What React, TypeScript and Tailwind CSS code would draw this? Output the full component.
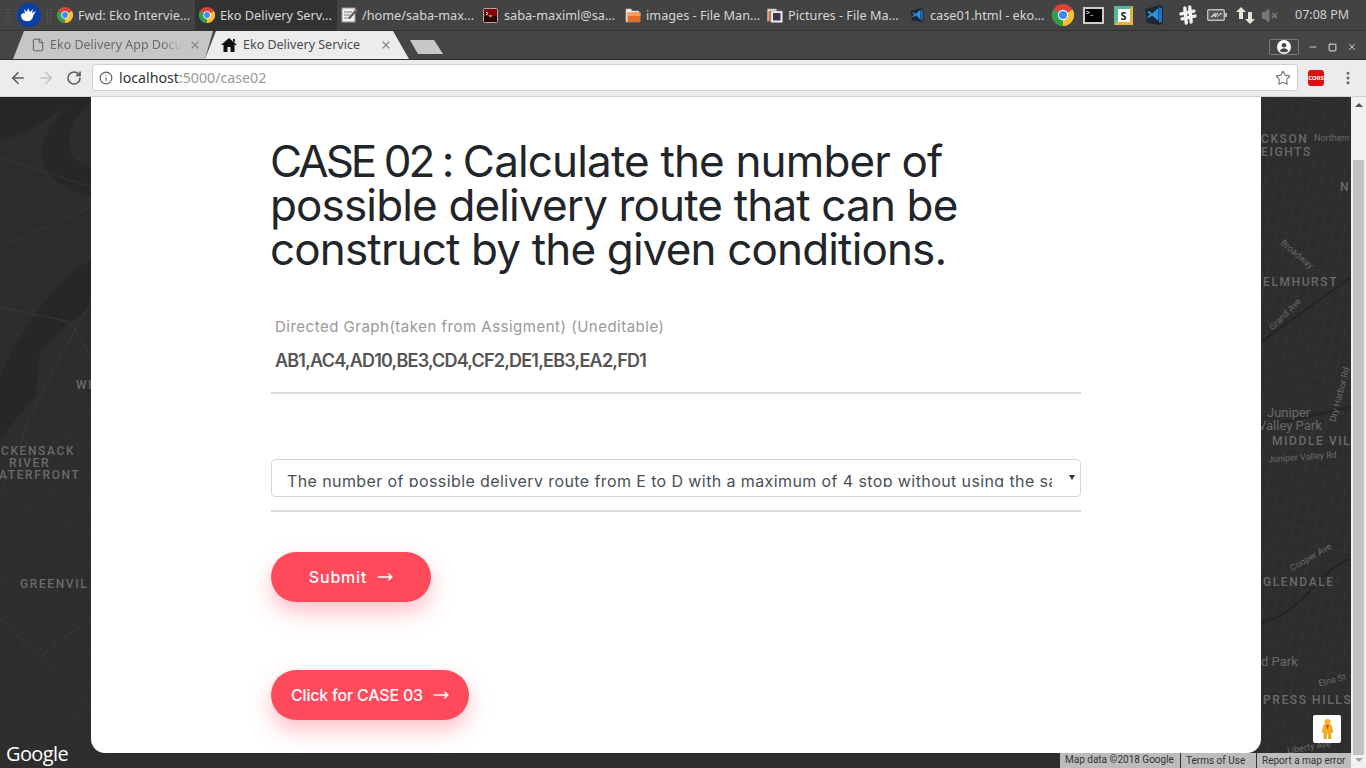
import { ArrowLeft, ArrowRight, Info, RotateCw, Star, X, File, Minus, Square, MoveRight, EllipsisVertical, VolumeX, Hash } from "lucide-react";

const poppins = "font-['Inter','Noto_Sans',sans-serif]";

function ChromeIcon({ size = 16 }: { size?: number }) {
  return (
    <svg width={size} height={size} viewBox="0 0 24 24" className="shrink-0">
      <circle cx="12" cy="12" r="12" fill="#db4437" />
      <path d="M12 12 L22.4 6 A12 12 0 0 1 12 24 Z" fill="#fbc02d" />
      <path d="M12 12 L12 24 A12 12 0 0 1 1.6 6 Z" fill="#2e9e4f" />
      <circle cx="12" cy="12" r="5.6" fill="#fff" />
      <circle cx="12" cy="12" r="4.4" fill="#4285f4" />
    </svg>
  );
}

function EditorIcon() {
  return (
    <svg width="16" height="16" viewBox="0 0 16 16" className="shrink-0">
      <rect x="1" y="1" width="13" height="14" fill="#f2f2f2" stroke="#999" />
      <path d="M3 5h8M3 8h6M3 11h5" stroke="#777" />
      <path d="M7 11 14 3l1.5 1.5L9 12z" fill="#555" />
      <path d="M14 2.5l1.5 1.5" stroke="#e060a0" strokeWidth="1.5" />
    </svg>
  );
}

function TerminalRedIcon() {
  return (
    <svg width="15" height="15" viewBox="0 0 15 15" className="shrink-0">
      <rect x="0.5" y="0.5" width="14" height="14" rx="1" fill="#8b0000" stroke="#aaa" />
      <rect x="1" y="8" width="13" height="6" fill="#300" />
      <path d="M3 4l2 1.5L3 7M6 8h3" stroke="#fff" fill="none" />
    </svg>
  );
}

function FolderIcon() {
  return (
    <svg width="16" height="15" viewBox="0 0 16 15" className="shrink-0">
      <path d="M1 1h5l1 2h7v11H1z" fill="#eee" stroke="#bbb" strokeWidth="0.6" />
      <rect x="2.5" y="4.5" width="13" height="9.5" fill="#e2702a" />
      <rect x="2.5" y="4.5" width="13" height="3.5" fill="#f0a060" />
    </svg>
  );
}

function PicturesIcon() {
  return (
    <svg width="16" height="15" viewBox="0 0 16 15" className="shrink-0">
      <rect x="0.5" y="1" width="9" height="12" fill="#ddd" stroke="#aaa" strokeWidth="0.6" />
      <rect x="1.5" y="3" width="3" height="10" fill="#d9702e" />
      <rect x="4" y="3" width="11.5" height="11.5" fill="#eee" stroke="#999" strokeWidth="0.6" />
      <rect x="6" y="5" width="7.5" height="7.5" fill="#3c3350" />
    </svg>
  );
}

function VsCodeIcon({ size = 14 }: { size?: number }) {
  return (
    <svg width={size} height={size} viewBox="0 0 20 20" className="shrink-0">
      <path d="M1 4 16 0l3 2v16l-3 2L3 18z" fill="#1c2733" />
      <path d="M14.5 3v13L8 10.5 5 13l-2-1 3-2.500L3 7l2-1 3 2.500z" fill="#2f8fdc" />
      <path d="M15 2l3 1.500v13L15 18z" fill="#1477c9" />
    </svg>
  );
}

const windowItems = [
  { label: "Fwd: Eko Intervie...", icon: <ChromeIcon />, active: false },
  { label: "Eko Delivery Serv...", icon: <ChromeIcon />, active: true },
  { label: "/home/saba-max...", icon: <EditorIcon />, active: false },
  { label: "saba-maximl@sa...", icon: <TerminalRedIcon />, active: false },
  { label: "images - File Man...", icon: <FolderIcon />, active: false },
  { label: "Pictures - File Ma...", icon: <PicturesIcon />, active: false },
  { label: "case01.html - eko...", icon: <VsCodeIcon />, active: false },
];

function Grip() {
  return <div className="h-[14px] w-[5px] bg-[radial-gradient(#666_1px,transparent_1px)] bg-[length:3px_3px]" />;
}

function TaskBar() {
  return (
    <div className="flex h-[31px] shrink-0 items-center border-b border-[#333] bg-[#434343] font-['Noto_Sans',sans-serif] text-[12.7px] text-[#d6d6d6]">
      <div className="ml-[5px] mr-[7px]"><Grip /></div>
      <div className="flex h-[24px] w-[24px] items-center justify-center rounded-full bg-[#0b3ea6]">
        <svg width="18" height="16" viewBox="0 0 18 16">
          <path d="M1 8C2 6 4 6 5 6L4 2l3 3 1-4 2 4 3-3-1 4 4-2-3 5c0 3-3 6-7 5-3 0-5-3-5-6z" fill="#fff" />
        </svg>
      </div>
      <div className="ml-[5px] mr-[2px]"><Grip /></div>
      {windowItems.map((item) => (
        <div
          key={item.label}
          className={`flex h-[30px] w-[142px] items-center gap-[6px] pl-[4px] ${item.active ? "bg-[#323232]" : ""}`}
        >
          <div className="flex w-[15px] justify-center">{item.icon}</div>
          <span className="mt-[1px] whitespace-nowrap">{item.label}</span>
        </div>
      ))}
      <div className="ml-[5px] flex items-center">
        <ChromeIcon size={22} />
        <div className="ml-[9px] flex h-[17px] w-[21px] items-start justify-start border-2 border-[#ccc] bg-black pl-[1px] text-[7px] leading-[8px] text-white">&gt;_</div>
        <div className="ml-[10px] flex h-[19px] w-[19px] items-center justify-center bg-[linear-gradient(135deg,#54b89a_0_50%,#e8b23a_50%_100%)]">
          <span className="flex h-[13px] w-[12px] items-center justify-center bg-white text-[11px] font-bold leading-none text-[#222]">S</span>
        </div>
        <div className="ml-[11px]"><VsCodeIcon size={20} /></div>
        <div className="ml-[14px]"><Hash size={20} strokeWidth={4} color="#f2f2f2" className="-rotate-12" /></div>
        <svg width="20" height="12" viewBox="0 0 20 12" className="ml-[9px]">
          <rect x="0.7" y="0.7" width="16.600" height="10.600" rx="1" fill="#555" stroke="#bdbdbd" strokeWidth="1.400" />
          <rect x="18" y="4" width="2" height="4" fill="#bdbdbd" />
          <path d="M4 8l4-4v2l3-2-3 4V6zM10 8l4-4v2" stroke="#ddd" fill="none" />
        </svg>
        <svg width="19" height="17" viewBox="0 0 19 17" className="ml-[9px]">
          <path d="M5 0l5 5H7v7H3V5H0z" fill="#e4e4d8" />
          <path d="M14 17l5-5h-3V5h-4v7H9z" fill="#e4e4d8" />
        </svg>
        <VolumeX size={17} color="#777" fill="#777" className="ml-[6px]" />
        <span className="ml-[17px] mt-[1px] whitespace-nowrap text-[12.5px] text-[#cfcfcf]">07:08 PM</span>
      </div>
    </div>
  );
}

function TabBar() {
  return (
    <div className="relative flex h-[29px] shrink-0 items-end border-b border-[#2f2f2f] bg-[#454545] font-['Noto_Sans',sans-serif] text-[12.5px]">
      <div className="ml-[13px] flex h-[28px] w-[200px] items-center bg-[#c6c6c6] pl-[18px] text-[#6a6a6a] [clip-path:polygon(11px_0,200px_0,192px_100%,0_100%)]">
        <File size={14} color="#555" strokeWidth={1.5} className="shrink-0" />
        <span className="ml-[5px] mt-[1px] w-[132px] overflow-hidden whitespace-nowrap [mask-image:linear-gradient(to_right,black_85%,transparent)]">Eko Delivery App Documentation</span>
        <X size={12} color="#888" strokeWidth={2.5} className="ml-[7px] shrink-0" />
      </div>
      <div className="-ml-[8px] flex h-[28px] w-[204px] items-center bg-[#ececec] pl-[16px] text-[#4a4a4a] [clip-path:polygon(11px_0,188px_0,204px_100%,0_100%)]">
        <svg width="16" height="14" viewBox="0 0 16 14" className="shrink-0">
          <path d="M8 0 16 7h-2.500v7h-4V9h-3v5h-4V7H0z M12 1h1.800v3.500L12 3z" fill="#111" />
        </svg>
        <span className="ml-[6px] mt-[1px] w-[136px] whitespace-nowrap">Eko Delivery Service</span>
        <X size={12} color="#888" strokeWidth={2.5} className="shrink-0 translate-x-[1px]" />
      </div>
      <div className="mb-[5px] ml-[1px] h-[14px] w-[33px] bg-[#c8c8c8] [clip-path:polygon(0_0,24px_0,33px_100%,8px_100%)]" />
      <div className="ml-auto mb-[4px] flex items-center text-[#ddd]">
        <div className="mr-[9px] flex h-[16px] w-[30px] items-center justify-center rounded-[2px] border border-[#777]">
          <svg width="14" height="14" viewBox="0 0 14 14">
            <circle cx="7" cy="7" r="7" fill="#fff" />
            <circle cx="7" cy="5.200" r="2.300" fill="#444" />
            <path d="M2.800 11c.6-2 2.400-2.800 4.200-2.800s3.600.8 4.200 2.800c-2 1.800-6.400 1.800-8.400 0z" fill="#444" />
          </svg>
        </div>
        <Minus size={10} color="#eee" strokeWidth={2} className="mr-[10px]" />
        <Square size={9} color="#eee" strokeWidth={2.5} className="mr-[10px]" />
        <X size={10} color="#eee" strokeWidth={2} className="mr-[9px]" />
      </div>
    </div>
  );
}

function ToolBar() {
  return (
    <div className="flex h-[37px] shrink-0 items-center border-b border-[#d0d0d0] bg-[#ececec] pb-[1px] font-['Noto_Sans',sans-serif]">
      <ArrowLeft size={18} color="#5c5c5c" strokeWidth={2.2} className="ml-[9px]" />
      <ArrowRight size={18} color="#c4c4c4" strokeWidth={2.2} className="ml-[10px]" />
      <RotateCw size={16} color="#5c5c5c" strokeWidth={2.4} className="ml-[11px]" />
      <div className="ml-[10px] flex h-[27px] w-[1206px] items-center rounded-[3px] border border-[#cfcfcf] bg-white pl-[6px] text-[14.2px]">
        <Info size={14} color="#5f5f5f" />
        <span className="ml-[6px] text-[#333]">localhost</span>
        <span className="text-[#999]">:5000/case02</span>
        <Star size={16} color="#777" strokeWidth={1.7} className="ml-auto mr-[6px]" />
      </div>
      <div className="ml-[10px] flex h-[16px] w-[16px] items-center justify-center rounded-[3px] bg-[#d9100f] text-[6px] font-bold leading-none text-white">CORS</div>
      <EllipsisVertical size={16} color="#666" strokeWidth={2.5} className="ml-[16px]" />
    </div>
  );
}

const districtClass = "text-[12px] font-medium tracking-[1.6px]";
const parkClass = "text-[13px]";
const roadClass = "text-[9px]";

const mapLabels = [
  { text: "CKENSACK", x: 1, y: 445, cls: districtClass },
  { text: "RIVER", x: 9, y: 457, cls: districtClass },
  { text: "ATERFRONT", x: -1, y: 469, cls: districtClass },
  { text: "GREENVIL", x: 20, y: 578, cls: districtClass },
  { text: "WI", x: 76, y: 379, cls: districtClass },
  { text: "CKSON", x: 1261, y: 133, cls: districtClass },
  { text: "EIGHTS", x: 1261, y: 146, cls: districtClass },
  { text: "Northern", x: 1314, y: 134, cls: roadClass },
  { text: "N", x: 1340, y: 181, cls: districtClass },
  { text: "Broadway", x: 1277, y: 250, cls: `${roadClass} rotate-[40deg]` },
  { text: "ELMHURST", x: 1263, y: 276, cls: districtClass },
  { text: "Grand Ave", x: 1265, y: 310, cls: `${roadClass} -rotate-[45deg]` },
  { text: "Dry Harbor Rd", x: 1336, y: 390, cls: `${roadClass} -rotate-[75deg] -translate-x-[24px]` },
  { text: "Juniper", x: 1267, y: 406, cls: parkClass },
  { text: "Valley Park", x: 1258, y: 419, cls: parkClass },
  { text: "MIDDLE VIL", x: 1272, y: 435, cls: districtClass },
  { text: "Juniper Valley Rd", x: 1268, y: 453, cls: `${roadClass} -rotate-[4deg]` },
  { text: "Cooper Ave", x: 1288, y: 553, cls: `${roadClass} -rotate-[30deg]` },
  { text: "GLENDALE", x: 1263, y: 576, cls: districtClass },
  { text: "d Park", x: 1261, y: 655, cls: parkClass },
  { text: "Etna St", x: 1318, y: 676, cls: `${roadClass} -rotate-[15deg]` },
  { text: "PRESS HILLS", x: 1263, y: 694, cls: districtClass },
  { text: "Liberty Ave", x: 1287, y: 743, cls: `${roadClass} -rotate-[10deg]` },
];

function MapLayer() {
  return (
    <>
      <svg className="absolute inset-0 h-full w-full" viewBox="0 0 1351 671" preserveAspectRatio="none">
        <rect width="1351" height="671" fill="#2d2d2d" />
        <defs>
          <pattern id="streets" width="14" height="11" patternUnits="userSpaceOnUse" patternTransform="rotate(-28)">
            <path d="M0 0H14M0 0V11" stroke="#363636" strokeWidth="1" fill="none" />
          </pattern>
          <pattern id="streets2" width="11" height="15" patternUnits="userSpaceOnUse" patternTransform="rotate(12)">
            <path d="M0 0H11M0 0V15" stroke="#373737" strokeWidth="1" fill="none" />
          </pattern>
        </defs>
        <path d="M0 0H75C60 15 40 30 0 45Z" fill="#272727" />
        <path d="M75 0C45 30 35 55 48 75 60 90 75 95 91 100V70C75 68 65 55 70 35 75 20 85 10 91 5V0Z" fill="#272727" />
        <path d="M91 162C60 180 25 225 7 265L0 280V342L35 299 40 256C55 235 75 222 91 209Z" fill="#272727" />
        <path d="M0 60L91 90M0 150L91 110M0 210L70 225 91 260M0 400L30 320 60 260 91 205M0 520L40 560 91 520" stroke="#383838" fill="none" />
        <path d="M20 340L91 260V671H0V420Z" fill="url(#streets)" />
        <rect x="1261" y="0" width="90" height="671" fill="url(#streets2)" />
        <path d="M1261 330L1351 310M1261 525C1300 520 1320 470 1351 462M1261 245L1351 180" stroke="#242424" strokeWidth="2" fill="none" />
      </svg>
      {mapLabels.map((label) => (
        <span
          key={label.text}
          className={`absolute whitespace-nowrap font-['Roboto',sans-serif] leading-none text-[#6a6a6a] ${label.cls}`}
          style={{ left: label.x, top: label.y - 97 }}
        >
          {label.text}
        </span>
      ))}
    </>
  );
}

function RedButton({ label, width, tracking }: { label: string; width: string; tracking: string }) {
  return (
    <div
      className={`flex h-[50px] ${width} items-center justify-center gap-[10px] rounded-full bg-[#ff4a5c] text-[16px] font-medium text-white shadow-[0_10px_22px_rgba(255,74,92,0.35)]`}
    >
      <span className={tracking}>{label}</span>
      <MoveRight size={16} strokeWidth={2.5} />
    </div>
  );
}

function Card() {
  return (
    <div className={`relative ml-[91px] flex h-[656px] w-[1170px] flex-col rounded-b-[14px] bg-white pl-[180px] ${poppins}`}>
      <h1 className="-ml-[1px] mt-[42px] w-[720px] text-[44px] font-normal leading-[44px] tracking-[-0.85px] text-[#212529]">
        <span className="tracking-[-3px]">CASE 02 :</span> Calculate the number of possible delivery route that can be construct by the given conditions.
      </h1>
      <div className="mt-[44px] w-[810px] border-b-2 border-[#d9d9d9] pb-[19px] pl-[4px]">
        <p className="text-[15px] leading-[24px] tracking-[0.5px] text-[#999]">Directed Graph(taken from Assigment) (Uneditable)</p>
        <p className="mt-[10px] text-[18px] font-semibold leading-[24px] tracking-[-0.8px] text-[#555]">AB1,AC4,AD10,BE3,CD4,CF2,DE1,EB3,EA2,FD1</p>
      </div>
      <div className="mt-[65px] w-[810px] border-b-2 border-[#d9d9d9] pb-[13px]">
        <div className="relative h-[38px] rounded-[4px] border border-[#d6d6d6] bg-white">
          <div className="ml-[15px] h-[27px] w-[765px] overflow-hidden whitespace-nowrap pt-[9px] text-[16px] leading-[24px] tracking-[0.4px] text-[#495057]">
            The number of possible delivery route from E to D with a maximum of 4 stop without using the same route twice
          </div>
          <span className="absolute right-[5px] top-[15px] h-0 w-0 border-x-[3px] border-t-[5px] border-x-transparent border-t-[#333]" />
        </div>
      </div>
      <div className="mt-[40px]"><RedButton label="Submit" width="w-[160px]" tracking="tracking-[0.8px]" /></div>
      <div className="mt-[68px]"><RedButton label="Click for CASE 03" width="w-[198px]" tracking="tracking-[-0.2px]" /></div>
    </div>
  );
}

function MapFooter() {
  return (
    <>
      <span className="absolute bottom-[2px] left-[6px] font-['Open_Sans',sans-serif] text-[20px] font-medium leading-[24px] tracking-[-0.6px] text-white">Google</span>
      <div className="absolute bottom-[25px] left-[1313px] flex h-[28px] w-[28px] items-center justify-center rounded-[2px] bg-white">
        <svg width="13" height="20" viewBox="0 0 13 20">
          <circle cx="6.500" cy="3" r="3" fill="#f5b21b" />
          <path d="M3 6h7l2 7-2 .5V20H7.500v-6h-2v6H3v-6.500L1 13z" fill="#f5b21b" stroke="#c98a10" strokeWidth="0.5" />
          <path d="M5 6h3l-1.500 5z" fill="#e0402a" />
        </svg>
      </div>
      <div className="absolute bottom-0 left-[1060px] flex h-[15px] items-center bg-[#bcbcbc] font-['Roboto',sans-serif] text-[10px] leading-none text-[#333]">
        <span className="-mt-[2px] w-[120px] pl-[5px]">Map data ©2018 Google</span>
        <span className="h-full w-[76px] border-l border-[#333] pl-[5px] pt-[3px]">Terms of Use</span>
        <span className="h-full w-[95px] border-l border-[#333] pl-[5px] pt-[3px]">Report a map error</span>
      </div>
    </>
  );
}

function ScrollBar() {
  return (
    <div className="flex w-[15px] shrink-0 flex-col items-center bg-[#f1f1f1]">
      <span className="mt-[6px] h-0 w-0 border-x-[4px] border-b-[4px] border-x-transparent border-b-[#505050]" />
      <div className="mt-[53px] h-[595px] w-[11px] bg-[#c1c1c1]" />
      <span className="mt-[3px] h-0 w-0 border-x-[4px] border-t-[4px] border-x-transparent border-t-[#a3a3a3]" />
    </div>
  );
}

export default function App() {
  return (
    <div className="flex h-screen w-full flex-col overflow-hidden">
      <TaskBar />
      <TabBar />
      <ToolBar />
      <div className="flex min-h-0 flex-1">
        <div className="relative flex-1 overflow-hidden">
          <MapLayer />
          <MapFooter />
          <Card />
        </div>
        <ScrollBar />
      </div>
    </div>
  );
}
